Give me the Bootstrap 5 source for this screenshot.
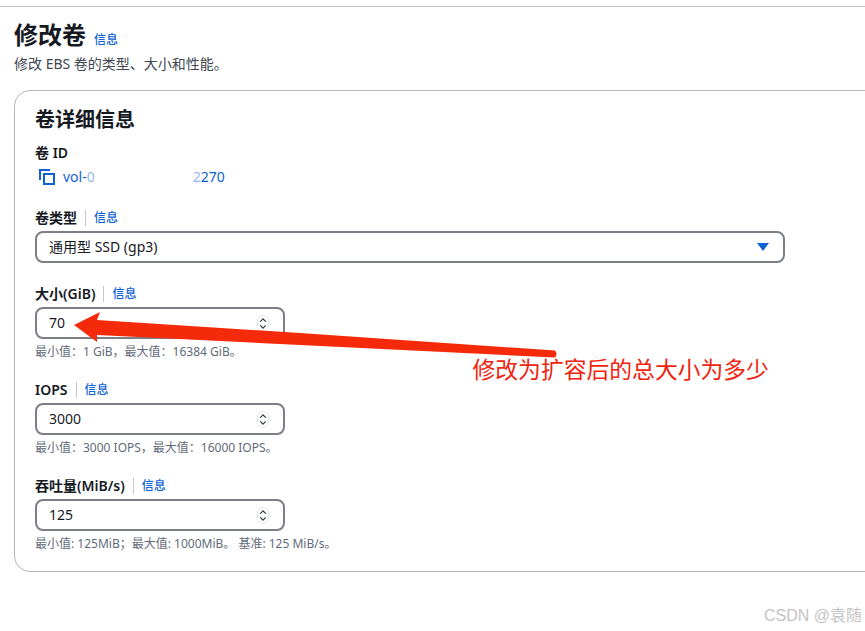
<!DOCTYPE html>
<html lang="zh-CN">
<head>
<meta charset="utf-8">
<title>修改卷</title>
<link href="https://cdn.jsdelivr.net/npm/bootstrap@5.3.0/dist/css/bootstrap.min.css" rel="stylesheet">
<style>
html,body{height:631px;overflow:hidden}
body{position:relative;background:#fff;color:#16191f;font-family:"Noto Sans","Noto Sans CJK SC",sans-serif;font-size:14px;line-height:18px}
.top-rule{height:7px;border-bottom:1px solid #c6c6cd}
.page-wrap{padding:13px 0 0 14px;width:905px}
.page-title{font-size:24px;line-height:30px;font-weight:700;margin:0;color:#16191f}
.info-link{color:#0f62d6;font-size:12px;font-weight:500;text-decoration:none;line-height:16px}
.page-head .info-link{margin-left:8px;margin-top:9px}
.page-desc{margin:5px 0 17px;color:#414750;font-size:14px;line-height:18px}
.vol-card{border:1px solid #b6b6bc;border-radius:16px;padding:17px 20px 0;height:482px;background:#fff}
.card-heading{font-size:20px;line-height:24px;font-weight:700;margin:0 0 12px;color:#16191f}
.fld-label{font-size:14px;line-height:18px;font-weight:600;margin:0;color:#16191f}
.id-row{margin:4px 0 0 4px;height:22px;color:#0f62d6;font-size:14px;text-decoration:none}
.id-gap{width:98px}
.id-dim{color:#0f62d6;opacity:.45}
.sep{width:1px;height:16px;background:#c6c6cd;margin:0 8px}
.fld-type{margin-top:21px}
.fld-next{margin-top:22px}
.fld-first{margin-top:22px}
.box-select.form-select{width:750px;height:32px;margin-top:4px;padding:0 40px 0 12px;border:2px solid #7c7f87;border-radius:8px;color:#16191f;font-size:14px;line-height:28px;background-size:12px 8px;background-position:right 14px center;background-image:url("data:image/svg+xml,%3Csvg xmlns='http://www.w3.org/2000/svg' viewBox='0 0 12 8'%3E%3Cpath d='M0 0h12L6 8z' fill='%230f62d6'/%3E%3C/svg%3E");box-shadow:none}
.box-num{width:250px;height:32px;margin-top:4px;border:2px solid #7c7f87;border-radius:8px;padding:0 14px 0 12px;background:#fff}
.box-num .form-control{border:0;padding:0 0 2px;height:28px;box-shadow:none;color:#16191f;font-size:14px;background:transparent;border-radius:0}
.spin-ico{flex:none;width:12px;height:17px}
.help-txt{margin:5px 0 0;font-size:12px;line-height:15px;color:#5f6b7a}
.note-arrow{position:absolute;left:0;top:0;width:865px;height:631px;pointer-events:none}
.note-text{position:absolute;left:472.500px;top:354px;font-size:22.800px;line-height:30px;color:#f0230f;font-family:"Noto Sans CJK SC",sans-serif;white-space:nowrap}
.wm{position:absolute;right:3px;top:606px;font-family:"Liberation Sans","Noto Sans CJK SC",sans-serif;font-size:16px;line-height:20px;color:#c4c4c4;white-space:nowrap}
</style>
</head>
<body>
<div class="top-rule"></div>
<div class="page-wrap">
  <div class="page-head d-flex align-items-center">
    <h1 class="page-title">修改卷</h1>
    <a class="info-link" href="#">信息</a>
  </div>
  <p class="page-desc">修改 EBS 卷的类型、大小和性能。</p>
  <div class="card vol-card">
    <h2 class="card-heading">卷详细信息</h2>
    <div class="fld-label">卷 ID</div>
    <a class="id-row d-flex align-items-center" href="#">
      <svg width="16" height="16" viewBox="0 0 16 16" fill="none" stroke="#0f62d6" stroke-width="2" class="me-2"><path d="M1 11V1h10"/><rect x="5" y="5" width="10" height="10"/></svg>
      <span>vol-<span class="id-dim">0</span></span><span class="id-gap"></span><span class="id-dim">2</span><span>270</span>
    </a>
    <div class="fld-type">
      <div class="d-flex align-items-center"><label class="fld-label">卷类型</label><span class="sep"></span><a class="info-link" href="#">信息</a></div>
      <select class="form-select box-select"><option>通用型 SSD (gp3)</option></select>
    </div>
    <div class="fld-first">
      <div class="d-flex align-items-center"><label class="fld-label">大小(GiB)</label><span class="sep"></span><a class="info-link" href="#">信息</a></div>
      <div class="box-num d-flex align-items-center">
        <input class="form-control" type="text" value="70">
        <svg class="spin-ico" viewBox="0 0 13 18" fill="none"><rect x=".5" y=".5" width="12" height="17" rx="6" stroke="#dfe2e6"/><path d="M3.500 7l3-3 3 3M3.500 11l3 3 3-3" stroke="#3a3f47" stroke-width="1.400"/></svg>
      </div>
      <p class="help-txt">最小值：1 GiB，最大值：16384 GiB。</p>
    </div>
    <div class="fld-next">
      <div class="d-flex align-items-center"><label class="fld-label">IOPS</label><span class="sep"></span><a class="info-link" href="#">信息</a></div>
      <div class="box-num d-flex align-items-center">
        <input class="form-control" type="text" value="3000">
        <svg class="spin-ico" viewBox="0 0 13 18" fill="none"><rect x=".5" y=".5" width="12" height="17" rx="6" stroke="#dfe2e6"/><path d="M3.500 7l3-3 3 3M3.500 11l3 3 3-3" stroke="#3a3f47" stroke-width="1.400"/></svg>
      </div>
      <p class="help-txt">最小值：3000 IOPS，最大值：16000 IOPS。</p>
    </div>
    <div class="fld-next">
      <div class="d-flex align-items-center"><label class="fld-label">吞吐量(MiB/s)</label><span class="sep"></span><a class="info-link" href="#">信息</a></div>
      <div class="box-num d-flex align-items-center">
        <input class="form-control" type="text" value="125">
        <svg class="spin-ico" viewBox="0 0 13 18" fill="none"><rect x=".5" y=".5" width="12" height="17" rx="6" stroke="#dfe2e6"/><path d="M3.500 7l3-3 3 3M3.500 11l3 3 3-3" stroke="#3a3f47" stroke-width="1.400"/></svg>
      </div>
      <p class="help-txt">最小值: 125MiB；最大值: 1000MiB。 基准: 125 MiB/s。</p>
    </div>
  </div>
</div>
<svg class="note-arrow" viewBox="0 0 865 631"><path d="M74 325L100 312 97 320 300 333 555 350.500Q558 354 555 357.500L300 345 97 335 97 342z" fill="#f52a0a"/></svg>
<div class="note-text">修改为扩容后的总大小为多少</div>
<div class="wm">CSDN @袁随</div>
<script src="https://cdn.jsdelivr.net/npm/bootstrap@5.3.0/dist/js/bootstrap.bundle.min.js"></script>
</body>
</html>
